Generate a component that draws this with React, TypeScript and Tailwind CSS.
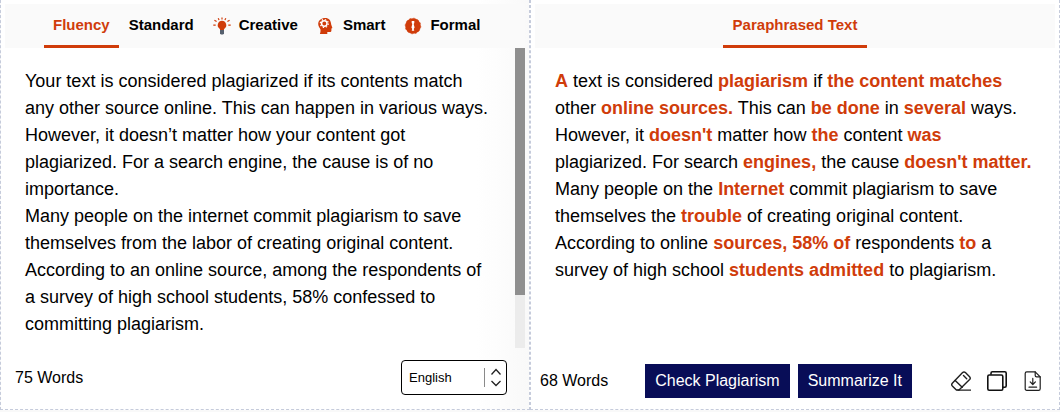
import React, { useState } from 'react';

interface IconProps {
  className?: string;
}

interface Tab {
  name: string;
  icon?: React.FC<IconProps>;
}

const BulbIcon: React.FC<IconProps> = ({ className }) => (
  <svg viewBox="0 0 18 18" className={className} aria-hidden="true">
    <g stroke="#d03c0a" strokeWidth="1.2">
      <path d="M9 .4v2M5.2 1.3l.9 1.8M12.8 1.3l-.9 1.8M1.4 3.3l2.2 1.3M16.6 3.3l-2.2 1.3M.3 8.2h2.4M15.3 8.2h2.4" />
    </g>
    <path d="M9 3.8a4.3 4.3 0 0 0-2.6 7.700c.5.4.7.9.7 1.500h3.800c0-.6.2-1.100.7-1.500A4.300 4.300 0 0 0 9 3.800z" fill="#d03c0a" />
    <path d="M7 13h4v3.200l-.9 1.400H7.900L7 16.200z" fill="#56606e" />
  </svg>
);

const HeadIcon: React.FC<IconProps> = ({ className }) => (
  <svg viewBox="0 0 18 18" className={className} aria-hidden="true">
    <path d="M8.200 1C4.400 1 1.200 3.500 1.200 6.900c0 2.400 1.500 3.700 2.100 5 .5 1.300.2 3.300-.4 5.100h7.400v-2h2.500c1 0 1.600-.6 1.600-1.600v-1.800l1-.7-1.200-3.400C14 3.700 12 1 8.200 1z" fill="#d03c0a" />
    <circle cx="7.300" cy="6.500" r="2.700" fill="none" stroke="#fff" strokeWidth="1.500" />
    <circle cx="7.300" cy="6.500" r="4" fill="none" stroke="#fff" strokeWidth="1.200" strokeDasharray="1.400 1.740" />
  </svg>
);

const BadgeIcon: React.FC<IconProps> = ({ className }) => (
  <svg viewBox="0 0 18 18" className={className} aria-hidden="true">
    <circle cx="9" cy="9" r="7.800" fill="#d03c0a" />
    <circle cx="9" cy="9" r="7.800" fill="none" stroke="#d03c0a" strokeWidth=".6" strokeDasharray="2 2.080" />
    <path d="M7.700 4h2.600v2l-.6 1 .9 3.600-.9 1.400.6 1.800H7.700l.6-1.800-.9-1.400.9-3.600-.6-1z" fill="#fff" />
  </svg>
);

const EraserIcon: React.FC<IconProps> = ({ className }) => (
  <svg viewBox="0 0 20 20" fill="none" stroke="#1f1f1f" strokeWidth="1.400" strokeLinecap="round" strokeLinejoin="round" className={className} aria-hidden="true">
    <path d="M1.300 12.200 11.600 1.600q1.400-1.300 2.800 0l4.200 4.200q1.300 1.400 0 2.800L8 19H5.400l-4.100-4.100q-1.200-1.300 0-2.700z" />
    <path d="m4.200 9.400 7 6.800M12.500 4.600l3.200 3.100M7 19.100h12.500" />
  </svg>
);

const CopyIcon: React.FC<IconProps> = ({ className }) => (
  <svg viewBox="0 0 20 20" fill="none" stroke="#111" strokeWidth="1.600" strokeLinejoin="round" className={className} aria-hidden="true">
    <rect x="0.800" y="4" width="15" height="15.200" rx="1.400" />
    <path d="M4 3.800V2.200Q4 .8 5.400.8h12.400q1.400 0 1.400 1.400v12.600q0 1.400-1.400 1.400H16" />
  </svg>
);

const DownloadIcon: React.FC<IconProps> = ({ className }) => (
  <svg viewBox="0 0 20 20" fill="none" stroke="#1f1f1f" strokeWidth="1.200" strokeLinecap="round" strokeLinejoin="round" className={className} aria-hidden="true">
    <path d="M3.800.8h8.400l5 5v11.900q0 1.600-1.600 1.600H3.800q-1.600 0-1.600-1.600V2.400Q2.200.8 3.800.8z" />
    <path d="M12.200.8v3.600q0 1.400 1.400 1.400h3.600M9.800 7.400v6M7.200 10.900l2.600 2.600 2.600-2.600M6 16.200h7.600" />
  </svg>
);

const tabs: Tab[] = [
  { name: 'Fluency' },
  { name: 'Standard' },
  { name: 'Creative', icon: BulbIcon },
  { name: 'Smart', icon: HeadIcon },
  { name: 'Formal', icon: BadgeIcon },
];

const source = `Your text is considered plagiarized if its contents match any other source online. This can happen in various ways. However, it doesn’t matter how your content got plagiarized. For a search engine, the cause is of no importance.
Many people on the internet commit plagiarism to save themselves from the labor of creating original content. According to an online source, among the respondents of a survey of high school students, 58% confessed to committing plagiarism.`;

const actions = [
  { label: 'Clear', icon: EraserIcon },
  { label: 'Copy', icon: CopyIcon },
  { label: 'Download', icon: DownloadIcon },
];

const Hl: React.FC<{ children: React.ReactNode }> = ({ children }) => (
  <strong className="font-bold text-[#d03c0a]">{children}</strong>
);

const App: React.FC = () => {
  const [active, setActive] = useState('Fluency');
  const [text, setText] = useState(source);

  return (
    <div className="min-h-screen bg-[#f9f9f9] font-['Liberation_Sans',Arial,sans-serif] text-black">
      <main className="grid grid-cols-2">
        {/* Input side */}
        <section className="flex flex-col border-x border-b border-dashed border-[#c5cbdb] bg-linear-to-r from-white from-90% to-[#f9f9f9] px-1 pt-1">
          <div className="flex h-11 gap-px bg-[#fafafa] pl-[39px]">
            {tabs.map(({ name, icon: Icon }) => (
              <button
                key={name}
                onClick={() => setActive(name)}
                className={`flex items-center gap-2 border-b-3 px-[9px] pt-0.5 text-[15px] font-bold ${
                  active === name ? 'border-[#d03c0a] text-[#d03c0a]' : 'border-transparent'
                }`}
              >
                {Icon && <Icon className="size-[18px]" />}
                {name}
              </button>
            ))}
          </div>

          <div className="flex h-[300px]">
            <textarea
              aria-label="Text to paraphrase"
              spellCheck={false}
              value={text}
              onChange={(e) => setText(e.target.value)}
              className="flex-1 resize-none overflow-y-auto py-5 pr-6 pl-5 text-lg leading-[27px] outline-none [scrollbar-width:none]"
            />
            <div className="w-[10px] bg-[#ececec]">
              <div className="h-[247px] bg-[#8f8f8f]" />
            </div>
          </div>

          <div className="flex h-[61px] items-center justify-between pr-[18px] pb-0.5 pl-[10px]">
            <span>75 Words</span>
            <div className="relative">
              <select
                aria-label="Language"
                className="h-[35px] w-[106px] appearance-none rounded border border-black bg-white pl-[7px] text-[13px]"
              >
                <option>English</option>
                <option>Spanish</option>
                <option>French</option>
              </select>
              <svg viewBox="0 0 18 20" fill="none" className="pointer-events-none absolute top-2 right-[5px] h-5 w-[18px]" aria-hidden="true">
                <path d="M.5 0v19" stroke="#8a8a8a" />
                <path d="m7.500 6.500 4.500-5 4.500 5M7.500 13l4.500 4.500 4.500-4.500" stroke="#222" strokeWidth="1.300" />
              </svg>
            </div>
          </div>
        </section>

        {/* Result side */}
        <section className="flex flex-col border-x border-b border-dashed border-[#c5cbdb] bg-white px-1 pt-1">
          <div className="flex h-11 justify-center bg-[#fafafa]">
            <h2 className="flex items-center border-b-3 border-[#d03c0a] px-[10px] pt-0.5 text-[15px] font-bold text-[#d03c0a]">
              Paraphrased Text
            </h2>
          </div>

          <p className="h-[300px] overflow-y-auto p-5 text-lg leading-[27px]">
            <Hl>A</Hl> text is considered <Hl>plagiarism</Hl> if <Hl>the content matches</Hl> other{' '}
            <Hl>online sources.</Hl> This can <Hl>be done</Hl> in <Hl>several</Hl> ways. However, it{' '}
            <Hl>doesn't</Hl> matter how <Hl>the</Hl> content <Hl>was</Hl> plagiarized. For search{' '}
            <Hl>engines,</Hl> the cause <Hl>doesn't matter.</Hl> Many people on the <Hl>Internet</Hl> commit
            plagiarism to save themselves the <Hl>trouble</Hl> of creating original content. According to online{' '}
            <Hl>sources, 58% of</Hl> respondents <Hl>to</Hl> a survey of high school{' '}
            <Hl>students admitted</Hl> to plagiarism.
          </p>

          <div className="flex h-[61px] items-center pt-1 pr-3 pl-[5px]">
            <span>68 Words</span>
            <div className="ml-[37px] flex gap-2">
              <button className="h-[34px] bg-[#080d57] px-[10px] text-white">Check Plagiarism</button>
              <button className="h-[34px] bg-[#080d57] px-[10px] text-white">Summarize It</button>
            </div>
            <div className="ml-auto flex gap-4">
              {actions.map(({ label, icon: Icon }) => (
                <button key={label} aria-label={label}>
                  <Icon className="size-5" />
                </button>
              ))}
            </div>
          </div>
        </section>
      </main>
    </div>
  );
};

export default App;
